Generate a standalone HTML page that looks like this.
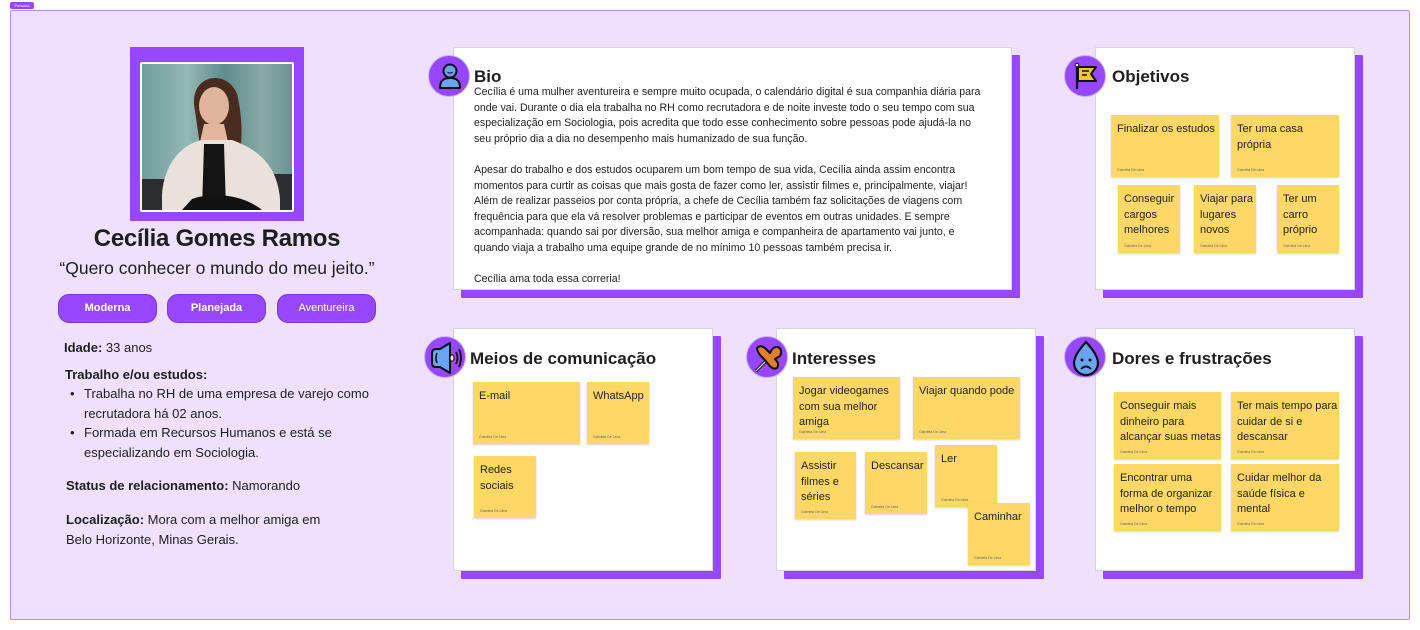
<!DOCTYPE html>
<html><head><meta charset="utf-8">
<style>
*{margin:0;padding:0;box-sizing:border-box}
body{width:1420px;height:630px;background:#fff;position:relative;overflow:hidden;font-family:"Liberation Sans",Arial,sans-serif;color:#1e1e1e}
.a{position:absolute}
.frame{left:10px;top:10px;width:1400px;height:610px;background:#efe1fd;border:1px solid #b88af5;border-radius:2px}
.tag{left:10px;top:2px;height:7px;width:24px;background:#9747ff;border-radius:2px;color:#fff;font-size:4px;line-height:7px;text-align:center}
.card{background:#fff;border:1px solid #d6d6d6}
.sh{background:#9747ff;border-radius:1px}
.ic{width:42px;height:42px;border-radius:50%;background:#9747ff;border:1px solid #c9b3f0}
.ic svg{position:absolute;left:0;top:0}
.tt{font-size:17px;font-weight:bold;color:#1e1e1e}
.st{background:#fdd867;box-shadow:0 1px 2px rgba(0,0,0,.18);font-size:11px;line-height:15.5px;padding:7px 3px 6px 6px;color:#222;white-space:nowrap;overflow:visible}
.st i{position:absolute;left:6px;bottom:5px;font-size:3.5px;font-style:normal;color:#666;line-height:4px}
.btn{top:294px;width:99px;height:29px;border-radius:11px;background:#9747ff;border:1px solid #7a35d9;color:#fff;font-size:11px;font-weight:bold;text-align:center;line-height:27px}
.lt{font-size:13px;line-height:19.5px;color:#1e1e1e}
.bio{font-size:10.6px;line-height:15.6px;color:#1e1e1e;width:515px}
</style></head><body>
<div class="a tag">Persona</div>
<div class="a frame"></div>

<div class="a" style="left:130px;top:47px;width:174px;height:174px;background:#9747ff"></div>
<div class="a" style="left:140px;top:62px;width:154px;height:150px;border:2px solid #fff;border-radius:2px;overflow:hidden;background:linear-gradient(90deg,#6f9d9c,#93b9b5 30%,#5f8c8c 55%,#88aaa6 80%,#6c9492)">
<svg width="150" height="146" viewBox="0 0 150 146">
<rect x="110" y="110" width="40" height="40" fill="#2a2e2e"/>
<rect x="0" y="115" width="30" height="35" fill="#2a2e2e"/>
<path d="M52 40 C50 10 85 5 95 30 C100 50 102 80 95 100 L60 95 Z" fill="#4a2c1e"/>
<ellipse cx="72" cy="42" rx="15" ry="19" fill="#e0b49a"/>
<path d="M62 60 L82 60 L86 78 L58 78 Z" fill="#e3b79c"/>
<path d="M20 130 C22 100 40 80 60 76 L90 76 C115 85 135 100 138 135 L138 146 L20 146 Z" fill="#e9e1da"/>
<path d="M62 80 L82 80 L84 146 L60 146 Z" fill="#141414"/>
<path d="M50 135 C70 128 100 130 120 146 L40 146 Z" fill="#111"/>
</svg></div>
<div class="a" style="left:0;width:434px;top:225px;text-align:center;font-size:24px;font-weight:bold;letter-spacing:-0.3px">Cecília Gomes Ramos</div>
<div class="a" style="left:0;width:434px;top:258px;text-align:center;font-size:17.5px">“Quero conhecer o mundo do meu jeito.”</div>
<div class="a btn" style="left:58px">Moderna</div>
<div class="a btn" style="left:167px">Planejada</div>
<div class="a btn" style="left:277px;font-weight:normal">Aventureira</div>

<div class="a lt" style="left:64px;top:338px"><b>Idade:</b> 33 anos</div>
<div class="a lt" style="left:65px;top:365px"><b>Trabalho e/ou estudos:</b></div>
<div class="a lt" style="left:70px;top:384px;width:310px">
<div style="position:relative;padding-left:14px"><span style="position:absolute;left:0">•</span>Trabalha no RH de uma empresa de varejo como recrutadora há 02 anos.</div>
<div style="position:relative;padding-left:14px"><span style="position:absolute;left:0">•</span>Formada em Recursos Humanos e está se especializando em Sociologia.</div>
</div>
<div class="a lt" style="left:66px;top:476px"><b>Status de relacionamento:</b> Namorando</div>
<div class="a lt" style="left:66px;top:510px"><b>Localização:</b> Mora com a melhor amiga em<br>Belo Horizonte, Minas Gerais.</div>

<div class="a sh" style="left:461px;top:55px;width:559px;height:243px"></div>
<div class="a card" style="left:453px;top:47px;width:559px;height:243px"></div>
<div class="a ic" style="left:428px;top:55px"><svg width="42" height="42"><path d="M11 32 C11 24 15 22 21 22 C27 22 31 24 31 32 Z" fill="#6aa5f5" stroke="#111" stroke-width="2" stroke-linejoin="round"/><circle cx="21" cy="15" r="6.5" fill="#6aa5f5" stroke="#111" stroke-width="2"/><path d="M18.5 16 Q21 18.5 23.5 16" stroke="#111" fill="none"/></svg></div>
<div class="a tt" style="left:474px;top:67px">Bio</div>
<div class="a bio" style="left:474px;top:85px">Cecília é uma mulher aventureira e sempre muito ocupada, o calendário digital é sua companhia diária para onde vai. Durante o dia ela trabalha no RH como recrutadora e de noite investe todo o seu tempo com sua especialização em Sociologia, pois acredita que todo esse conhecimento sobre pessoas pode ajudá-la no seu próprio dia a dia no desempenho mais humanizado de sua função.<br><br>Apesar do trabalho e dos estudos ocuparem um bom tempo de sua vida, Cecília ainda assim encontra momentos para curtir as coisas que mais gosta de fazer como ler, assistir filmes e, principalmente, viajar! Além de realizar passeios por conta própria, a chefe de Cecília também faz solicitações de viagens com frequência para que ela vá resolver problemas e participar de eventos em outras unidades. E sempre acompanhada: quando sai por diversão, sua melhor amiga e companheira de apartamento vai junto, e quando viaja a trabalho uma equipe grande de no mínimo 10 pessoas também precisa ir.<br><br>Cecília ama toda essa correria!</div>

<div class="a sh" style="left:1103px;top:55px;width:260px;height:243px"></div>
<div class="a card" style="left:1095px;top:47px;width:260px;height:243px"></div>
<div class="a ic" style="left:1064px;top:55px"><svg width="42" height="42"><path d="M12 9 L12 33" stroke="#111" stroke-width="2.2"/><circle cx="12" cy="9" r="1.8" fill="#fff" stroke="#111"/><path d="M13 11 L31 11 L26 18 L31 25 L13 25 Z" fill="#f7c531" stroke="#111" stroke-width="2" stroke-linejoin="round"/><path d="M17 15 H24 M17 19 H22" stroke="#111" stroke-width="1.6"/></svg></div>
<div class="a tt" style="left:1112px;top:67px">Objetivos</div>
<div class="a st" style="left:1111px;top:115px;width:108px;height:62px">Finalizar os estudos<i>Gabriela De Lima</i></div>
<div class="a st" style="left:1231px;top:115px;width:108px;height:62px">Ter uma casa<br>própria<i>Gabriela De Lima</i></div>
<div class="a st" style="left:1118px;top:185px;width:62px;height:68px">Conseguir<br>cargos<br>melhores<i>Gabriela De Lima</i></div>
<div class="a st" style="left:1194px;top:185px;width:62px;height:68px">Viajar para<br>lugares<br>novos<i>Gabriela De Lima</i></div>
<div class="a st" style="left:1277px;top:185px;width:62px;height:68px">Ter um<br>carro<br>próprio<i>Gabriela De Lima</i></div>

<div class="a sh" style="left:461px;top:336px;width:260px;height:243px"></div>
<div class="a card" style="left:453px;top:328px;width:260px;height:243px"></div>
<div class="a ic" style="left:424px;top:336px"><svg width="42" height="42"><path d="M7 16 Q7 12 11 12 L15 12 L25 6 L25 36 L15 30 L11 30 Q7 30 7 26 Z" fill="#6aa5f5" stroke="#111" stroke-width="2" stroke-linejoin="round"/><path d="M12 16 Q10 21 12 26" stroke="#111" fill="none" stroke-width="1.6"/><ellipse cx="27" cy="21" rx="2" ry="3.2" fill="#f3e9c9" stroke="#111"/><path d="M31 15 Q34 21 31 27 M34 12 Q38 21 34 30" stroke="#111" fill="none" stroke-width="1.8"/></svg></div>
<div class="a tt" style="left:470px;top:349px">Meios de comunicação</div>
<div class="a st" style="left:473px;top:382px;width:107px;height:62px">E-mail<i>Gabriela De Lima</i></div>
<div class="a st" style="left:587px;top:382px;width:62px;height:62px">WhatsApp<i>Gabriela De Lima</i></div>
<div class="a st" style="left:474px;top:456px;width:62px;height:62px">Redes<br>sociais<i>Gabriela De Lima</i></div>

<div class="a sh" style="left:784px;top:336px;width:260px;height:243px"></div>
<div class="a card" style="left:776px;top:328px;width:260px;height:243px"></div>
<div class="a ic" style="left:746px;top:336px"><svg width="42" height="42"><path d="M9 34 L18 25" stroke="#111" stroke-width="3.2"/><path d="M9 34 L18 25" stroke="#eee" stroke-width="1.2"/><path d="M10 11 Q14 7 19 12 L23 16 Q26 9 31 10 Q36 13 33 19 L28 22 Q33 27 30 31 Q26 33 22 28 L17 22 Q10 16 10 11 Z" fill="#e07f2c" stroke="#111" stroke-width="2" stroke-linejoin="round"/></svg></div>
<div class="a tt" style="left:792px;top:349px">Interesses</div>
<div class="a st" style="left:793px;top:377px;width:107px;height:62px">Jogar videogames<br>com sua melhor<br>amiga<i>Gabriela De Lima</i></div>
<div class="a st" style="left:913px;top:377px;width:107px;height:62px">Viajar quando pode<i>Gabriela De Lima</i></div>
<div class="a st" style="left:795px;top:452px;width:61px;height:67px">Assistir<br>filmes e<br>séries<i>Gabriela De Lima</i></div>
<div class="a st" style="left:865px;top:452px;width:62px;height:62px">Descansar<i>Gabriela De Lima</i></div>
<div class="a st" style="left:935px;top:445px;width:62px;height:62px">Ler<i>Gabriela De Lima</i></div>
<div class="a st" style="left:968px;top:503px;width:62px;height:62px">Caminhar<i>Gabriela De Lima</i></div>

<div class="a sh" style="left:1103px;top:336px;width:260px;height:243px"></div>
<div class="a card" style="left:1095px;top:328px;width:260px;height:243px"></div>
<div class="a ic" style="left:1064px;top:336px"><svg width="42" height="42"><path d="M21 5 Q33 18 33 26 A12 12 0 0 1 9 26 Q9 18 21 5 Z" fill="#6aa5f5" stroke="#111" stroke-width="2.2"/><circle cx="17" cy="23" r="1.5" fill="#111"/><circle cx="25" cy="23" r="1.5" fill="#111"/><path d="M16 32 Q21 27 26 32" stroke="#111" fill="none" stroke-width="1.8"/></svg></div>
<div class="a tt" style="left:1112px;top:349px">Dores e frustrações</div>
<div class="a st" style="left:1114px;top:392px;width:107px;height:67px">Conseguir mais<br>dinheiro para<br>alcançar suas metas<i>Gabriela De Lima</i></div>
<div class="a st" style="left:1231px;top:392px;width:108px;height:67px">Ter mais tempo para<br>cuidar de si e<br>descansar<i>Gabriela De Lima</i></div>
<div class="a st" style="left:1114px;top:464px;width:107px;height:67px">Encontrar uma<br>forma de organizar<br>melhor o tempo<i>Gabriela De Lima</i></div>
<div class="a st" style="left:1231px;top:464px;width:108px;height:67px">Cuidar melhor da<br>saúde física e<br>mental<i>Gabriela De Lima</i></div>
</body></html>
